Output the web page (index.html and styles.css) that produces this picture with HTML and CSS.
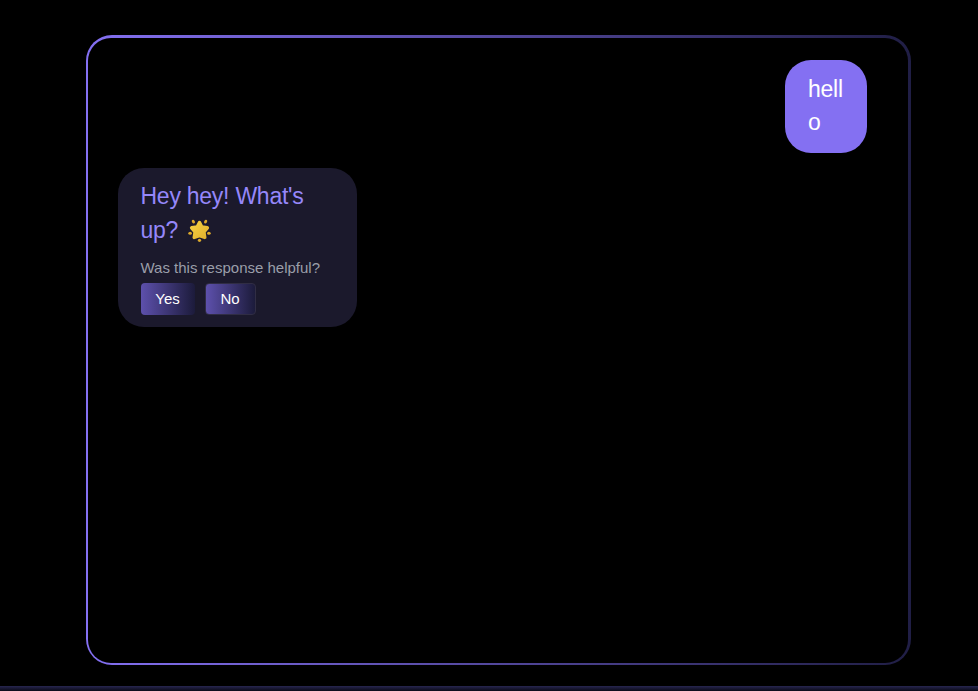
FILE: index.html
```html
<!DOCTYPE html>
<html lang="en">
<head>
<meta charset="utf-8">
<title>Chat</title>
<link rel="stylesheet" href="styles.css">
</head>
<body>
<main class="chat">
  <div class="messages">
    <div class="bubble user">hello</div>
    <div class="bubble bot">
      <p class="text">Hey hey! What's up? <svg class="star" viewBox="0 0 24 24" role="img" aria-label="Glowing star"><defs><linearGradient id="gold" x1="0" y1="0" x2="1" y2="1"><stop offset="0" stop-color="#f4cf42"/><stop offset="1" stop-color="#e2b32e"/></linearGradient></defs><path d="M12 3.6 14.4 8.3 20.2 9.2 16.6 13.5 17.5 19.2 12 17.3 6.5 19.2 7.4 13.5 3.8 9.2 9.6 8.3Z" fill="url(#gold)" stroke="url(#gold)" stroke-width="3.6" stroke-linejoin="round"/><g fill="#dca92b"><circle cx="12" cy="22.2" r="1.7"/><ellipse cx="2.2" cy="14.8" rx="1.9" ry="1.6"/><ellipse cx="21.8" cy="14.8" rx="1.9" ry="1.6"/><ellipse cx="5.6" cy="2.8" rx="1.5" ry="2" transform="rotate(-35 5.6 2.8)"/><ellipse cx="18.4" cy="2.8" rx="1.5" ry="2" transform="rotate(35 18.4 2.8)"/></g></svg></p>
      <p class="question">Was this response helpful?</p>
      <div class="actions">
        <button class="yes">Yes</button>
        <button class="no">No</button>
      </div>
    </div>
  </div>
</main>
<footer class="composer"></footer>
</body>
</html>
```

FILE: styles.css
```css
* { box-sizing: border-box; }
body {
  margin: 0;
  height: 691px;
  overflow: hidden;
  display: flex;
  flex-direction: column;
  background: #000;
  font-family: "Liberation Sans", Arial, sans-serif;
}
.chat {
  width: 825px;
  height: 630px;
  margin: 35px 0 21px 86px;
  padding: 3px 3px 2px 2px;
  flex: none;
  border-radius: 26px;
  background: linear-gradient(90deg, #8470f2, #201e45);
}
.messages {
  height: 100%;
  padding: 22px 41px 0 30px;
  display: flex;
  flex-direction: column;
  gap: 15px;
  border-radius: 23px;
  background: #000;
}
.bubble {
  border-radius: 26px;
  font-size: 23px;
  line-height: 34px;
  letter-spacing: -0.25px;
}
.user {
  align-self: flex-end;
  width: 82px;
  height: 93px;
  padding: 13px 22px 12px 23px;
  line-height: 33px;
  background: #8470f2;
  color: #fff;
  word-break: break-all;
}
.bot {
  width: 239px;
  height: 159px;
  padding: 11px 23px 11px 22.5px;
  background: #1b192c;
}
p { margin: 0; }
.text { color: #9587fa; }
.star {
  width: 23px;
  height: 23px;
  margin-left: 4px;
  vertical-align: -4px;
}
.question {
  margin-top: 11px;
  font-size: 15px;
  line-height: 20px;
  letter-spacing: 0;
  color: #9a9ea9;
}
.actions {
  display: flex;
  gap: 10px;
  margin-top: 5px;
}
button {
  height: 32px;
  padding: 0 0 2px;
  border: 0;
  border-radius: 4px;
  font: 15px "Liberation Sans", Arial, sans-serif;
  color: #fff;
  background: linear-gradient(90deg, #5d50ac, #1c1b3b);
}
.yes { width: 54px; }
.no {
  width: 51px;
  border: 1px solid #302d44;
}
.composer {
  height: 5px;
  flex: none;
  background: linear-gradient(#27264f, #1b1a38 40%, #0b0b18);
}
```
